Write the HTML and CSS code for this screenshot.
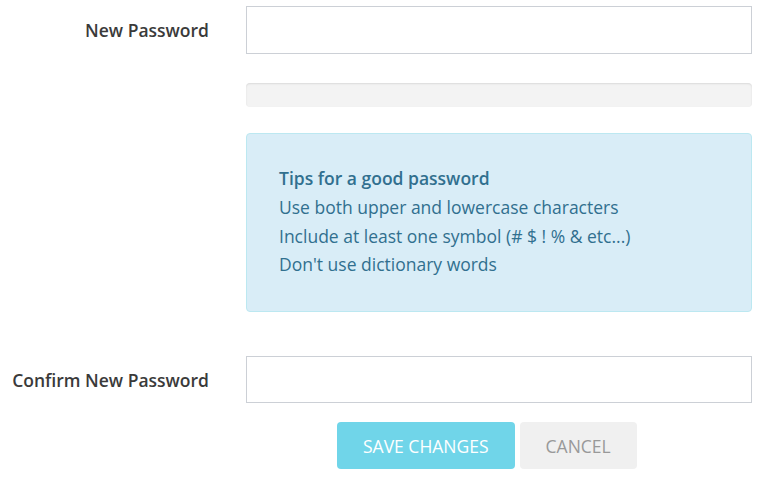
FILE: index.html
```html
<!DOCTYPE html>
<html>
<head>
<meta charset="utf-8">
<link rel="stylesheet" href="styles.css">
</head>
<body>
<form class="form">
  <div class="row row-first">
    <label class="label">New Password</label>
    <div class="field"><input class="input" type="password"></div>
  </div>
  <div class="row row-progress">
    <div></div>
    <div class="field"><div class="progress"></div></div>
  </div>
  <div class="row row-alert">
    <div></div>
    <div class="field">
      <div class="alert">
        <div class="alert-title">Tips for a good password</div>
        <div>Use both upper and lowercase characters</div>
        <div>Include at least one symbol (# $ ! % &amp; etc...)</div>
        <div>Don't use dictionary words</div>
      </div>
    </div>
  </div>
  <div class="row row-confirm">
    <label class="label">Confirm New Password</label>
    <div class="field"><input class="input input-confirm" type="password"></div>
  </div>
  <div class="row row-actions">
    <div></div>
    <div class="actions">
      <button type="button" class="btn btn-save">SAVE CHANGES</button>
      <button type="button" class="btn btn-cancel">CANCEL</button>
    </div>
  </div>
</form>
</body>
</html>
```
FILE: styles.css
```css
html, body {
  margin: 0;
  padding: 0;
  background: #fff;
}
body {
  font-family: "Open Sans", "Liberation Sans", sans-serif;
  font-size: 17.5px;
  color: #333;
}
.form {
  width: 752px;
  padding-right: 11px;
}
.row {
  display: grid;
  grid-template-columns: 209px 1fr;
  column-gap: 37px;
  align-items: center;
}
.row-first { margin-top: 6px; }
.row-progress { margin-top: 29px; }
.row-alert { margin-top: 26px; }
.row-confirm { margin-top: 44px; }
.row-actions { margin-top: 19px; }
.label {
  text-align: right;
  font-weight: 600;
  color: #3a3a3a;
  font-size: 17.5px;
}
.input {
  display: block;
  box-sizing: border-box;
  width: 100%;
  height: 48px;
  margin: 0;
  border: 1px solid #ccd0d6;
  background: #fff;
  outline: none;
}
.input-confirm {
  height: 47px;
}
.progress {
  height: 24px;
  background: #f3f3f3;
  border-radius: 4px;
  box-shadow: inset 0 1px 2px rgba(0,0,0,0.1);
}
.alert {
  box-sizing: border-box;
  background: #d9edf7;
  border: 1px solid #bce8f1;
  border-radius: 4px;
  color: #31708f;
  padding: 30px 32px 32px;
  line-height: 28.8px;
  font-size: 17.5px;
}
.alert-title {
  font-weight: 600;
}
.actions {
  display: flex;
  gap: 5px;
  padding-left: 91px;
}
.btn {
  height: 47px;
  border: none;
  border-radius: 4px;
  padding: 0 26px;
  font-family: "Open Sans", "Liberation Sans", sans-serif;
  font-size: 17.5px;
  cursor: pointer;
}
.btn-save {
  background: #70d5e9;
  color: #fff;
}
.btn-cancel {
  background: #f0f0f0;
  color: #999;
}
```
